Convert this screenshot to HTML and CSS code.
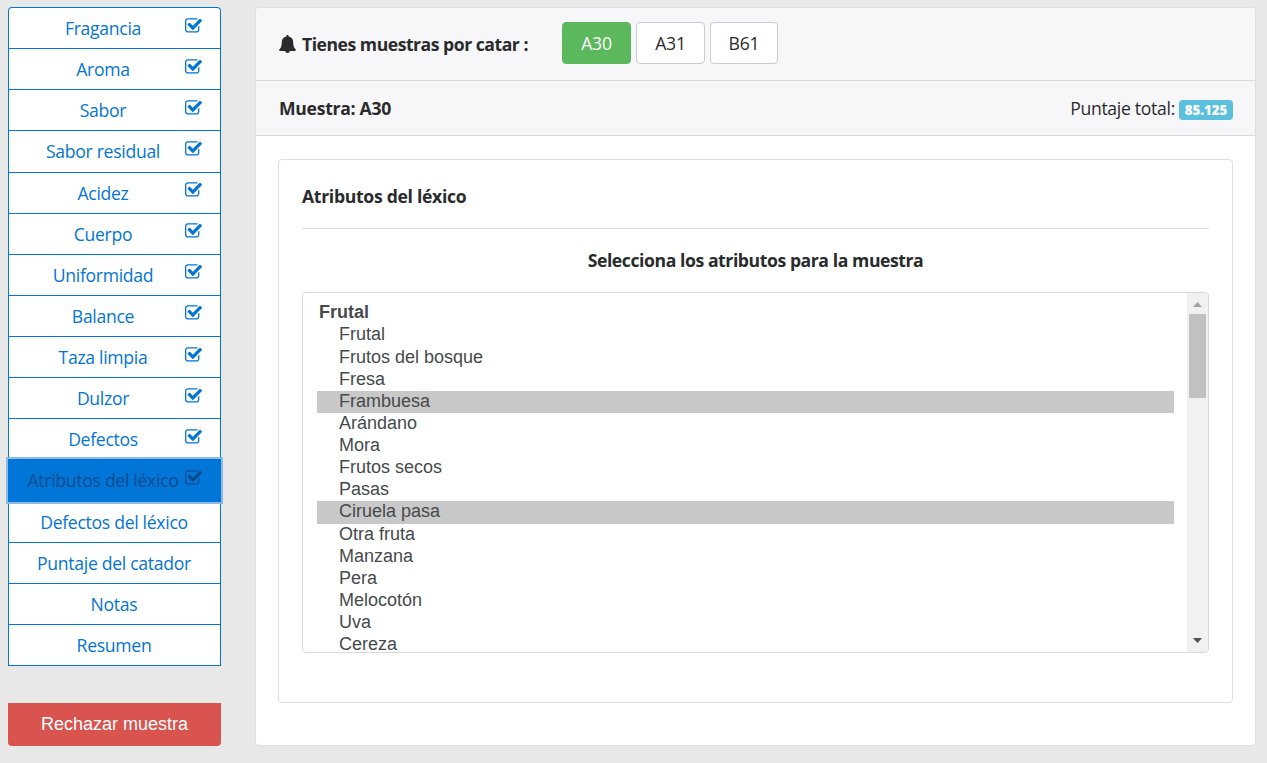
FILE: index.html
```html
<!DOCTYPE html>
<html lang="es">
<head>
<meta charset="utf-8">
<title>Catación</title>
<link rel="stylesheet" href="styles.css">
</head>
<body>
<svg class="defs" width="0" height="0" aria-hidden="true">
  <symbol id="check" viewBox="0 0 1664 1536">
    <path d="M1408 802v318q0 119-84.500 203.500t-203.500 84.500h-832q-119 0-203.500-84.500t-84.500-203.500v-832q0-119 84.500-203.500t203.500-84.500h832q63 0 117 25 15 7 18 23 3 17-9 29l-49 49q-10 10-23 10-3 0-9-2-23-6-45-6h-832q-66 0-113 47t-47 113v832q0 66 47 113t113 47h832q66 0 113-47t47-113v-254q0-13 9-22l64-64q10-10 23-10 6 0 12 3 20 8 20 29zm231-489l-814 814q-24 24-57 24t-57-24l-430-430q-24-24-24-57t24-57l110-110q24-24 57-24t57 24l263 263 647-647q24-24 57-24t57 24l110 110q24 24 24 57t-24 57z"/>
  </symbol>
</svg>
<div class="page">
  <aside class="sidebar">
    <nav class="steps">
      <a class="step"><span class="label">Fragancia</span><svg class="tick"><use href="#check"/></svg></a>
      <a class="step"><span class="label">Aroma</span><svg class="tick"><use href="#check"/></svg></a>
      <a class="step"><span class="label">Sabor</span><svg class="tick"><use href="#check"/></svg></a>
      <a class="step"><span class="label">Sabor residual</span><svg class="tick"><use href="#check"/></svg></a>
      <a class="step"><span class="label">Acidez</span><svg class="tick"><use href="#check"/></svg></a>
      <a class="step"><span class="label">Cuerpo</span><svg class="tick"><use href="#check"/></svg></a>
      <a class="step"><span class="label">Uniformidad</span><svg class="tick"><use href="#check"/></svg></a>
      <a class="step"><span class="label">Balance</span><svg class="tick"><use href="#check"/></svg></a>
      <a class="step"><span class="label">Taza limpia</span><svg class="tick"><use href="#check"/></svg></a>
      <a class="step"><span class="label">Dulzor</span><svg class="tick"><use href="#check"/></svg></a>
      <a class="step"><span class="label">Defectos</span><svg class="tick"><use href="#check"/></svg></a>
      <a class="step active"><span class="label">Atributos del léxico</span><svg class="tick"><use href="#check"/></svg></a>
      <a class="step"><span class="label">Defectos del léxico</span></a>
      <a class="step"><span class="label">Puntaje del catador</span></a>
      <a class="step"><span class="label">Notas</span></a>
      <a class="step"><span class="label">Resumen</span></a>
    </nav>
    <button class="reject">Rechazar muestra</button>
  </aside>
  <main class="card">
    <header class="bar samples">
      <svg class="bell" viewBox="0 0 17 18"><path d="M8.500 0c.7 0 1.200.5 1.200 1.200v.3c2.900.6 4.500 2.600 4.500 5.500 0 4.300 1 6.300 2.800 7.800 0 .7-.5 1.200-1.200 1.200H1.200c-.7 0-1.200-.5-1.200-1.200 1.800-1.500 2.800-3.500 2.800-7.800 0-2.900 1.600-4.900 4.500-5.500v-.3C7.300.5 7.800 0 8.500 0zM6.200 16h4.600a2.300 2 0 0 1-4.600 0z"/></svg>
      <strong class="pending">Tienes muestras por catar :</strong>
      <div class="sample-list">
        <button class="sample current">A30</button>
        <button class="sample">A31</button>
        <button class="sample last">B61</button>
      </div>
    </header>
    <header class="bar current-sample">
      <strong class="sample-name">Muestra: A30</strong>
      <span class="score">Puntaje total:</span>
      <span class="badge">85.125</span>
    </header>
    <section class="panel">
      <h4 class="title">Atributos del léxico</h4>
      <p class="prompt"><span>Selecciona los atributos para la muestra</span></p>
      <div class="listbox">
        <ul class="options">
          <li class="group">Frutal</li>
          <li>Frutal</li>
          <li>Frutos del bosque</li>
          <li>Fresa</li>
          <li class="selected">Frambuesa</li>
          <li>Arándano</li>
          <li>Mora</li>
          <li>Frutos secos</li>
          <li>Pasas</li>
          <li class="selected">Ciruela pasa</li>
          <li>Otra fruta</li>
          <li>Manzana</li>
          <li>Pera</li>
          <li>Melocotón</li>
          <li>Uva</li>
          <li>Cereza</li>
        </ul>
        <div class="scrollbar">
          <svg class="arrow up" viewBox="0 0 9 5"><path d="M0 5L4.500 0L9 5z"/></svg>
          <div class="thumb"></div>
          <svg class="arrow down" viewBox="0 0 9 5"><path d="M0 0L4.500 5L9 0z"/></svg>
        </div>
      </div>
    </section>
  </main>
</div>
</body>
</html>
```
FILE: styles.css
```css
* { box-sizing: border-box; }
body {
  margin: 0;
  height: 763px;
  overflow: hidden;
  background: #e8e8e8;
  color: #292b2c;
  font: 17.6px/26px "Open Sans", "Noto Sans", sans-serif;
}
.defs { display: block; height: 0; }
.page { display: flex; gap: 34px; padding: 7px 11px 0 8px; }
.sidebar { width: 213px; flex: none; }
.steps {
  display: flex;
  flex-direction: column;
  height: 659px;
  background: #fff;
  border-radius: 4px 4px 0 0;
  border-bottom: 1px solid #0275d8;
}
.step {
  display: flex;
  height: 41.125px;
  flex: none;
  padding: 7px 18px 0 17px;
  border: 1px solid #0275d8;
  border-bottom: 0;
  color: #0275d8;
}
.step:first-child { border-radius: 4px 4px 0 0; }
.label { flex: 1; text-align: center; white-space: nowrap; letter-spacing: -0.3px; }
.tick { width: 17px; height: 16px; margin: 2.500px 0 0 5px; flex: none; fill: currentColor; }
.step.active {
  position: relative;
  height: 43px;
  margin-bottom: -1.875px;
  background: #0275d8;
  color: #014c8c;
  box-shadow: 0 0 0 2px rgba(134, 184, 228, 0.95);
}
.reject {
  display: block;
  width: 213px;
  height: 43px;
  margin-top: 37px;
  padding: 0;
  border: 0;
  border-radius: 0 0 4px 4px;
  background: #d9534f;
  color: #fff;
  font: 18px "Liberation Sans", Arial, sans-serif;
}
.card {
  flex: 1;
  height: 739px;
  background: #fff;
  border: 1px solid #dfdfdf;
  border-radius: 4px;
}
.bar {
  display: flex;
  align-items: center;
  background: #f7f7f9;
  border-bottom: 1px solid #d9d9da;
  padding: 0 22px 0 23px;
}
.samples { height: 73px; border-radius: 3px 3px 0 0; }
.bell { width: 17px; height: 18px; margin-right: 6px; fill: #292b2c; }
.pending { width: 260px; letter-spacing: -0.48px; white-space: nowrap; }
.sample-list { display: flex; gap: 5px; margin-top: -3px; }
.sample {
  width: 69px;
  height: 42px;
  padding: 1px 0 0;
  border: 1px solid #ccc;
  border-radius: 4px;
  background: #fff;
  color: #292b2c;
  font: 17.6px "Open Sans", "Noto Sans", sans-serif;
  letter-spacing: -0.2px;
}
.sample.last { width: 68px; }
.sample.current { background: #5cb85c; border-color: #5cb85c; color: #fff; }
.current-sample { height: 55px; }
.sample-name { flex: 1; letter-spacing: -0.28px; }
.score { letter-spacing: -0.3px; margin-right: 4px; }
.badge {
  width: 54px;
  height: 20px;
  margin-top: 3px;
  border-radius: 4px;
  background: #5bc0de;
  color: #fff;
  font-size: 13.2px;
  font-weight: 800;
  line-height: 20px;
  text-align: center;
}
.panel {
  height: 544px;
  margin: 23px 22px 0;
  padding: 23px 23px 0;
  border: 1px solid #dfdfdf;
  border-radius: 4px;
}
.title {
  height: 46px;
  margin: 0;
  border-bottom: 1px solid #e1e1e1;
  font-size: 17.6px;
  letter-spacing: -0.3px;
}
.prompt { margin: 18px 0 19px; text-align: center; font-weight: 700; letter-spacing: -0.42px; }
.listbox {
  display: flex;
  justify-content: space-between;
  height: 361px;
  overflow: hidden;
  border: 1px solid #d9d9d9;
  border-radius: 4px;
}
.options {
  width: 857px;
  margin: 9.3px 0 0 14px;
  padding: 0;
  list-style: none;
  color: #464a4c;
  font: 18px/20px "Liberation Sans", Arial, sans-serif;
}
.options li { height: 22.13px; padding-left: 22px; }
.options .group { padding-left: 2px; font-weight: 700; }
.options .selected { background: #c8c8c8; }
.scrollbar {
  display: flex;
  flex-direction: column;
  align-items: center;
  width: 21px;
  background: #f1f1f1;
}
.arrow { width: 9px; height: 5px; }
.up { margin: 9px 0 7px; fill: #a3a3a3; }
.down { margin: auto 0 9px; fill: #505050; }
.thumb { width: 17px; height: 84px; background: #c1c1c1; }
```
